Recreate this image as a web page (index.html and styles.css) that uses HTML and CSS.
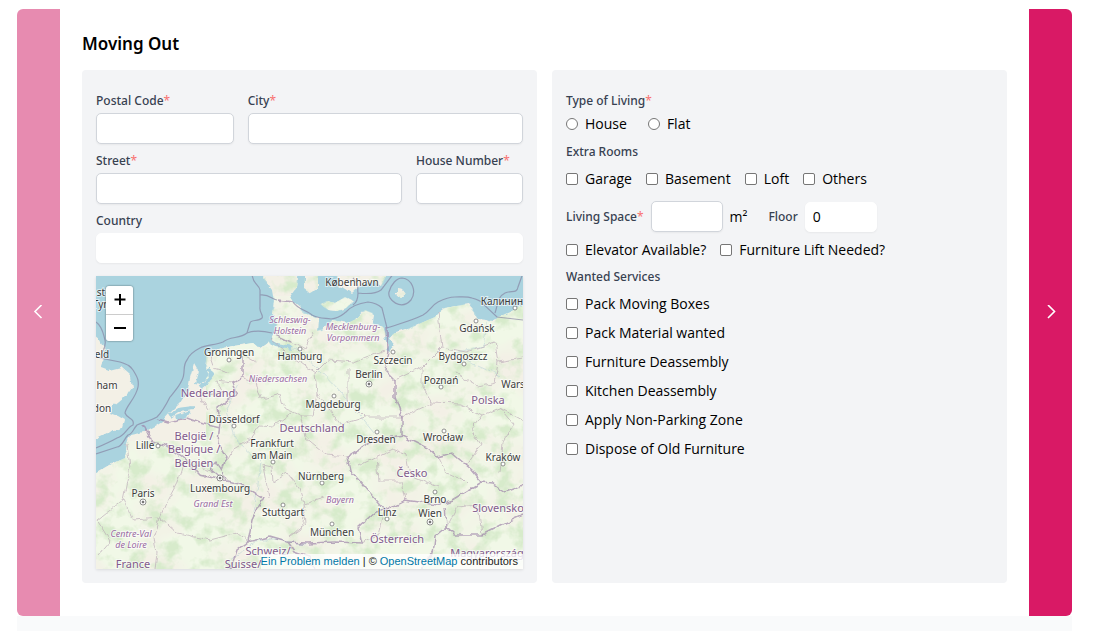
FILE: index.html
```html
<!DOCTYPE html>
<html lang="en">
<head>
<meta charset="utf-8">
<meta name="viewport" content="width=device-width, initial-scale=1">
<title>Moving Out</title>
<link rel="stylesheet" href="styles.css">
</head>
<body>
<div class="page">
  <div class="carousel">
    <button class="nav nav-prev" type="button" aria-label="Previous step" disabled>
      <svg class="chevron" viewBox="0 0 16 16" aria-hidden="true"><path d="M10.500 0 4 6.500l6.500 6.500"/></svg>
    </button>
    <main class="step">
      <h1 class="title">Moving Out</h1>
      <form class="cards">
        <section class="card address">
          <div class="row row-city">
            <div class="field"><label class="label" for="postal">Postal Code<span class="star">*</span></label><input class="input" id="postal" type="text"></div>
            <div class="field"><label class="label" for="city">City<span class="star">*</span></label><input class="input" id="city" type="text"></div>
          </div>
          <div class="row row-street">
            <div class="field"><label class="label" for="street">Street<span class="star">*</span></label><input class="input" id="street" type="text"></div>
            <div class="field"><label class="label" for="number">House Number<span class="star">*</span></label><input class="input" id="number" type="text"></div>
          </div>
          <div class="field"><label class="label" for="country">Country</label><input class="input plain" id="country" type="text"></div>

          <div class="map">
            <svg class="map-art" viewBox="0 0 427 293" preserveAspectRatio="xMidYMid slice" role="img" aria-label="Map of Central Europe">
              <defs>
                <filter id="rough" x="-5%" y="-5%" width="110%" height="110%">
                  <feTurbulence type="fractalNoise" baseFrequency=".12" numOctaves="2" seed="4" result="n"/>
                  <feDisplacementMap in="SourceGraphic" in2="n" scale="6" xChannelSelector="R" yChannelSelector="G"/>
                </filter>
                <filter id="woods" x="0" y="0" width="100%" height="100%">
                  <feTurbulence type="fractalNoise" baseFrequency=".06" numOctaves="4" seed="11"/>
                  <feColorMatrix values="0 0 0 0 .68  0 0 0 0 .83  0 0 0 0 .6  3.600 0 0 0 -1.650"/>
                </filter>
                <filter id="fields" x="0" y="0" width="100%" height="100%">
                  <feTurbulence type="fractalNoise" baseFrequency=".025" numOctaves="3" seed="3"/>
                  <feColorMatrix values="0 0 0 0 .88  0 0 0 0 .94  0 0 0 0 .8  3 0 0 0 -.850"/>
                </filter>
                <path id="mainland" d="M168-6 167 2 176 14 178 26 176 37 181 49 177 59 171 68 164 73 157 67 144 69 127 72 111 77 109 91 113 99 104 109 99 108 102 94 98 87 94 101 92 114 84 127 74 137 66 146 60 150 49 156 34 159 31 169 29 182 14 189-8 202-8 301 435 301 435 27 422 31 402 41 398 46 382 44 379 37 372 28 349 32 339 41 309 54 297 58 292 64 289 56 287 51 276 47 277 37 269 34 262 42 252 47 236 44 226 53 222 54 223 43 209 37 198 28 194 21 201 11 203-6Z"/>
                <path id="islands" d="M208-5 222-5 222 12 214 17 208 13ZM238-5 292-5 286 10 277 6 265 9 256 17 244 9ZM224 28 231 25 239 27 249 21 257 25 250 32 241 35 232 34ZM300 12 306 13 310 18 305 22 300 18ZM-8 54 3 63 10 77 5 91 13 94 25 91 34 99 36 111 28 122 17 131 13 137 22 140 29 144 27 151 11 157-8 166Z"/>
                <clipPath id="land"><use href="#mainland"/><use href="#islands"/></clipPath>
              </defs>
              <rect class="sea" width="427" height="293"/>
              <g class="ground" filter="url(#rough)"><use href="#mainland"/><use href="#islands"/></g>
              <g clip-path="url(#land)">
                <rect x="110" y="20" width="317" height="273" filter="url(#fields)"/>
                <rect y="165" width="110" height="128" filter="url(#fields)"/>
                <rect x="110" width="317" height="293" filter="url(#woods)"/>
                <rect y="165" width="110" height="128" filter="url(#woods)"/>
              </g>
              <g class="water" filter="url(#rough)">
                <path d="M111 94 116 98 109 108 104 112M98 132 83 134 74 140M94 137 80 142M170 63 181 69 196 72M289 62 296 68 292 75M176 61 166 64M402 39 426 28"/>
                <path class="river" d="M133 286 160 265 178 263 193 266 211 268M180 68 204 74 223 94 245 117 278 157M143 108 130 132 140 164 165 186 158 237M392 43 387 70 354 78 405 100"/>
              </g>
              <g class="region" filter="url(#rough)">
                <path d="M31 169 34 191 27 224 1 244M27 224 37 244 64 242 72 224 81 207 87 187M64 242 81 257 114 264 141 257 152 266M64 242 58 263 61 277 59 293M1 244 14 265 2 279M137 174 154 164 164 150 177 151 196 137M137 174 131 185M177 207 191 197 203 212 210 234 207 241 205 253 194 261M177 207 176 191 167 189 173 222M146 101 160 106 165 123 184 118 188 132 204 139 217 139 221 117 219 97 232 84 259 86 289 74M204 139 209 161 231 179 251 181M221 117 245 149 269 141 306 141M252 94 252 124 269 141M160 86 146 78M174 62 188 75 219 97M195 66 209 74 218 55M342 37 346 71 326 91 326 111 336 127 315 137 306 141M299 104 326 91M346 71 370 76 399 66 402 86 427 82M359 97 382 111 399 107 402 86M336 127 365 128 386 139 404 132 427 145M386 139 376 153 385 169 370 190M404 132 418 149 407 166 404 197M263 189 296 173 311 178 315 199 342 211M281 180 283 205 305 205 309 224M342 181 350 198 366 203 376 213M113 77 118 92 133 96M121 107 127 116 104 121 112 133M137 107 119 105M101 190 116 195 109 202M193 261 209 248 207 228 228 222M351 251 361 231 382 229 386 259M289 234 283 258 266 267"/>
              </g>
              <g class="border maritime">
                <path d="M156-3C156 8 163 8 164 14L164 31C163 36 168 40 166 42 162 46 155 43 154 47L151 57C144 63 134 60 127 66 119 69 110 69 104 72 96 76 93 79 91 84 86 90 90 97 86 104 83 111 78 116 74 121 70 129 67 135 61 141 54 145 48 146 41 149 37 153 37 158 32 159 28 163 26 171 21 171L0 178M151 57C159 54 168 55 176 57M164 19C174 18 175 23 181 24M197 26C201 33 212 35 216 39 223 43 229 42 235 43 244 42 247 38 250 36 256 29 265 27 272 26 281 27 284 30 286 32L291 52C302 48 315 45 327 39 334 35 336 29 342 26 350 22 353 21 359 21 364 21 371 20 376 22 383 24 385 25 386 27L401 41 427 44M399 37C402 29 401 21 409 17 415 14 421 18 422 11L427-3M306 2C316 3 321 15 315 24 305 35 291 24 293 16 295 8 301 2 306 2M257 2C264 10 261 12 262 17 271 18 280 18 285 14L298-3M262 17C262 24 260 27 257 29M0 46C7 51 7 58 9 64 11 73 4 77 4 82L24 86C33 89 34 90 37 94 42 102 43 105 42 111 40 122 30 130 29 137 31 143 39 142 37 149 31 151 30 159 21 162 14 166 7 169 0 172"/>
              </g>
              <g class="border" filter="url(#rough)">
                <path d="M181 24 197 26M166 42M176 57 195 66M291 52 292 74 289 94 299 104 299 121 306 141 306 159M146 76 146 101 137 107 141 117 122 131 124 146 122 167 131 181 126 194 131 204M61 143 71 146 91 142 104 147 124 152M47 148 56 166 69 169 87 181 104 199 127 204 147 209 167 222 156 244 152 266 141 274 137 287 131 295M113 192 120 186 126 194M113 192 127 204M152 266 174 261 191 266 211 267 239 266 266 267 262 251 279 236 289 234 254 194 251 181 279 164 306 159 332 172 342 181 356 177 376 194 386 206 396 207 409 216 427 209M386 206 356 224 342 229 309 224 289 234M349 231 351 251 359 259 386 259 409 247 427 239M351 251 339 261 337 277 325 293M191 266 198 276 213 281 219 293"/>
              </g>
              <g class="dots">
                <circle cx="133" cy="84" r="2"/><circle cx="204" cy="73" r="2"/><circle cx="297" cy="76" r="2"/><circle cx="238" cy="120" r="2"/><circle cx="345" cy="111" r="2"/><circle cx="368" cy="88" r="2"/><circle cx="380" cy="45" r="2"/><circle cx="419" cy="32" r="2"/><circle cx="138" cy="150" r="2"/><circle cx="62" cy="170" r="2"/><circle cx="177" cy="186" r="2"/><circle cx="187" cy="229" r="2"/><circle cx="281" cy="156" r="2"/><circle cx="348" cy="155" r="2"/><circle cx="407" cy="188" r="2"/><circle cx="226" cy="207" r="2"/><circle cx="339" cy="216" r="2"/><circle cx="291" cy="243" r="2"/><circle cx="236" cy="248" r="2"/>
                <g class="capital"><circle cx="273" cy="108" r="3"/><circle cx="124" cy="202" r="3"/><circle cx="47" cy="226" r="3"/><circle cx="334" cy="246" r="3"/></g>
                <g class="pip"><circle cx="273" cy="108" r="1"/><circle cx="124" cy="202" r="1"/><circle cx="47" cy="226" r="1"/><circle cx="334" cy="246" r="1"/></g>
              </g>
              <g class="city">
                <text x="256" y="10">København</text><text x="417" y="29">Калининград</text><text x="381" y="56">Gdańsk</text>
                <text x="133" y="80">Groningen</text><text x="204" y="84">Hamburg</text><text x="297" y="88">Szczecin</text><text x="367" y="84">Bydgoszcz</text>
                <text x="273" y="102">Berlin</text><text x="345" y="108">Poznań</text><text x="429" y="112">Warszawa</text><text x="237" y="132">Magdeburg</text>
                <text x="138" y="147">Düsseldorf</text><text x="280" y="167">Dresden</text><text x="347" y="165">Wrocław</text><text x="49" y="173">Lille</text>
                <text x="176" y="171">Frankfurt</text><text x="176" y="183">am Main</text><text x="407" y="185">Kraków</text><text x="225" y="204">Nürnberg</text>
                <text x="124" y="216">Luxembourg</text><text x="47" y="221">Paris</text><text x="339" y="227">Brno</text><text x="187" y="240">Stuttgart</text>
                <text x="291" y="240">Linz</text><text x="334" y="241">Wien</text><text x="236" y="260">München</text>
                <text x="5" y="20">st</text><text x="8" y="32">Tyne</text><text x="6" y="82">eld</text><text x="11" y="113">ham</text><text x="6" y="136">don</text>
              </g>
              <g class="nation">
                <text x="112" y="121">Nederland</text><text x="392" y="128">Polska</text><text x="216" y="156">Deutschland</text><text x="98" y="164">België /</text>
                <text x="98" y="177">Belgique /</text><text x="98" y="191">Belgien</text><text x="316" y="201">Česko</text><text x="402" y="236">Slovensko</text>
                <text x="301" y="267">Österreich</text><text x="37" y="292">France</text><text x="172" y="279">Schweiz/</text><text x="147" y="292">Suisse/</text><text x="391" y="281">Magyarország</text>
              </g>
              <g class="state">
                <text x="194" y="47">Schleswig-</text><text x="194" y="58">Holstein</text><text x="257" y="54">Mecklenburg-</text><text x="257" y="65">Vorpommern</text>
                <text x="182" y="106">Niedersachsen</text><text x="244" y="227">Bayern</text><text x="117" y="231">Grand Est</text><text x="35" y="261">Centre-Val</text><text x="35" y="272">de Loire</text>
              </g>
            </svg>
            <div class="zoom">
              <button class="zoom-btn" type="button" aria-label="Zoom in"><svg viewBox="0 0 12 12" aria-hidden="true"><path d="M6 0v11M0.500 5.500h11"/></svg></button>
              <button class="zoom-btn" type="button" aria-label="Zoom out"><svg viewBox="0 0 12 12" aria-hidden="true"><path d="M0 6h12"/></svg></button>
            </div>
            <div class="credit"><a href="#report">Ein Problem melden</a> | © <a href="#osm">OpenStreetMap</a> contributors</div>
          </div>
        </section>

        <section class="card details">
          <fieldset class="group">
            <legend class="label">Type of Living<span class="star">*</span></legend>
            <div class="options wide">
              <label class="option"><input class="radio" type="radio" name="living">House</label>
              <label class="option"><input class="radio" type="radio" name="living">Flat</label>
            </div>
          </fieldset>
          <fieldset class="group rooms">
            <legend class="label">Extra Rooms</legend>
            <div class="options">
              <label class="option"><input class="check" type="checkbox">Garage</label>
              <label class="option"><input class="check" type="checkbox">Basement</label>
              <label class="option"><input class="check" type="checkbox">Loft</label>
              <label class="option"><input class="check" type="checkbox">Others</label>
            </div>
          </fieldset>
          <div class="space">
            <label class="label" for="space">Living Space<span class="star">*</span></label>
            <input class="input small" id="space" type="text">
            <span class="unit">m²</span>
            <label class="label" for="floor">Floor</label>
            <input class="input plain small" id="floor" type="text" value="0">
          </div>
          <div class="options lifts">
            <label class="option"><input class="check" type="checkbox">Elevator Available?</label>
            <label class="option"><input class="check" type="checkbox">Furniture Lift Needed?</label>
          </div>
          <fieldset class="group services">
            <legend class="label">Wanted Services</legend>
            <div class="list">
              <label class="option"><input class="check" type="checkbox">Pack Moving Boxes</label>
              <label class="option"><input class="check" type="checkbox">Pack Material wanted</label>
              <label class="option"><input class="check" type="checkbox">Furniture Deassembly</label>
              <label class="option"><input class="check" type="checkbox">Kitchen Deassembly</label>
              <label class="option"><input class="check" type="checkbox">Apply Non-Parking Zone</label>
              <label class="option"><input class="check" type="checkbox">Dispose of Old Furniture</label>
            </div>
          </fieldset>
        </section>
      </form>
    </main>
    <button class="nav nav-next" type="button" aria-label="Next step">
      <svg class="chevron" viewBox="0 0 16 16" aria-hidden="true"><path d="M5 0 11.500 6.500 5 13"/></svg>
    </button>
  </div>
  <div class="below"></div>
</div>
</body>
</html>
```
FILE: styles.css
```css
* { box-sizing: border-box; }
body { margin: 0; background: #fff; color: #000; font: 14px/20px "Open Sans", "Noto Sans", sans-serif; }
button, input { font: inherit; color: inherit; }
.page { min-height: 100vh; padding: 9px 27px 0 17px; display: flex; flex-direction: column; }
.carousel { display: flex; }
.below { flex: 1; background: #f9fafb; }
.nav { width: 43px; flex: none; border: 0; padding: 0; background: #d91965; display: flex; align-items: center; justify-content: center; }
.nav-prev { background: #e78bb0; border-radius: 6px 0 0 6px; }
.nav-next { border-radius: 0 6px 6px 0; }
.chevron { width: 16px; height: 16px; fill: none; stroke: #fff; stroke-width: 1.6; }
.step { flex: 1; min-width: 0; padding: 21px 22px 33px; }
.title { margin: 0 0 12px; font: 600 17px/28px "Noto Sans", sans-serif; }
.cards { display: grid; grid-template-columns: 1fr 1fr; gap: 15px; }
.card { min-width: 0; background: #f3f4f6; border-radius: 4px; padding: 21px 14px 14px; }
.address { display: flex; flex-direction: column; gap: 7px; }
.row { display: grid; gap: 14px; }
.row-city { grid-template-columns: 1fr 2fr; }
.row-street { grid-template-columns: 20fr 7fr; }
.field { display: flex; flex-direction: column; gap: 2px; min-width: 0; }
.label { padding: 0; font: 500 12px/20px "Noto Sans", sans-serif; color: #374151; white-space: nowrap; }
.star { color: #f87171; font-weight: 400; }
.input { width: 100%; min-width: 0; height: 31px; padding: 0 7px; border: 1px solid #d1d5db; border-radius: 5px; background: #fff; box-shadow: 0 1px 2px rgba(0, 0, 0, .05); }
.input.plain { height: 30px; border-color: #fff; }
.input.small { width: 72px; }

.map { position: relative; margin-top: 6px; height: 293px; overflow: hidden; box-shadow: 0 1px 3px rgba(0, 0, 0, .1); }
.map-art { display: block; width: 100%; height: 100%; }
.sea { fill: #aad3df; }
.ground { fill: #f3f0e6; }
.water { fill: none; stroke: #aad3df; stroke-width: 4; }
.river { stroke: #b5d0d8; stroke-width: 1; opacity: .5; }
.region { fill: none; stroke: #b7a4b4; stroke-width: 1; opacity: .6; }
.border { fill: none; stroke: #9b80a8; stroke-width: 1.5; opacity: .65; }
.maritime { stroke: #84809f; stroke-width: 1.2; }
.dots { fill: #fff; stroke: #777; stroke-width: .8; }
.pip { fill: #444; }
.map text { font-family: "Noto Sans", sans-serif; text-anchor: middle; paint-order: stroke; stroke: rgba(255, 255, 255, .6); stroke-width: 2px; }
.city text { font-size: 10px; fill: #3c3c3c; }
.nation text { font-size: 11px; fill: #815a8c; }
.state text { font-size: 9px; font-style: italic; fill: #9a6ba3; }
.zoom { position: absolute; left: 10px; top: 10px; width: 27px; border-radius: 3px; overflow: hidden; box-shadow: 0 0 2px rgba(0, 0, 0, .6); }
.zoom-btn { display: flex; align-items: center; justify-content: center; width: 27px; height: 28px; padding: 0; border: 0; background: #fff; }
.zoom-btn + .zoom-btn { height: 27px; border-top: 1px solid #ccc; }
.zoom-btn svg { width: 12px; height: 12px; stroke: #000; stroke-width: 2; }
.credit { position: absolute; right: 0; bottom: 0; padding: 0 5px 0 0; background: rgba(255, 255, 255, .8); color: #222; font: 11px/15px "Liberation Sans", Arial, sans-serif; white-space: nowrap; }
.credit a { color: #0078a8; text-decoration: none; }

.group { margin: 0; padding: 0; border: 0; min-width: 0; }
.group .label { display: block; }
.options { display: flex; flex-wrap: wrap; column-gap: 14px; }
.wide { column-gap: 21px; margin-top: 3px; }
.option { display: flex; align-items: center; gap: 7px; white-space: nowrap; }
.radio, .check { appearance: none; flex: none; width: 12px; height: 12px; margin: 0; border: 1px solid #767676; background: #fff; }
.radio { border-radius: 50%; }
.check { border-radius: 2px; }
.radio:checked { border: 4px solid #d91965; }
.check:checked { background: #d91965; }
.rooms { margin-top: 8px; }
.rooms .options { margin-top: 7px; }
.space { display: flex; align-items: center; gap: 7px; margin-top: 12px; }
.unit { margin-right: 14px; }
.lifts { margin-top: 8px; }
.services { margin-top: 7px; }
.list { display: grid; gap: 9px; margin-top: 7px; }
```
